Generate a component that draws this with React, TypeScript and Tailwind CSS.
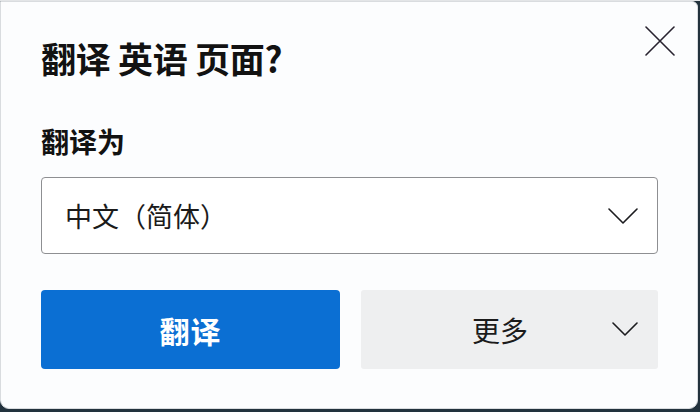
import React from "react";

const font = { fontFamily: '"Noto Sans CJK SC", "Noto Sans", sans-serif' };

function Chevron({ w, h }: { w: number; h: number }) {
  return (
    <svg width={w} height={h} viewBox={`0 0 ${w} ${h}`} fill="none">
      <path
        d={`M1 1 L${w / 2} ${h - 1} L${w - 1} 1`}
        stroke="#1c1c1f"
        strokeWidth="1.6"
        strokeLinecap="round"
        strokeLinejoin="round"
      />
    </svg>
  );
}

export default function App() {
  return (
    <div className="w-[700px] h-[412px] bg-[#22323d] flex flex-col overflow-hidden" style={font}>
      <div className="h-[1px] w-full bg-[#e3e5e7] shrink-0" />
      <div className="relative w-[698px] h-[408px] bg-[#fcfdfe] border border-[#d9dcdf] rounded-b-[9px] rounded-tr-[6px] pl-[40px] pr-[39px] pt-[38px]">
        <button className="absolute top-[24px] right-[22px] w-[30px] h-[30px] flex items-center justify-center">
          <svg width="30" height="30" viewBox="0 0 30 30" fill="none">
            <path d="M1 1 L29 29 M29 1 L1 29" stroke="#28232f" strokeWidth="1.6" strokeLinecap="round" />
          </svg>
        </button>
        <h1 className="text-[35px] leading-[35px] font-bold text-[#121212] tracking-[-0.3px]">
          翻译 英语 页面?
        </h1>
        <div className="mt-[52px] text-[28px] leading-[28px] font-bold text-[#121212]">
          翻译为
        </div>
        <div className="mt-[22px] h-[77px] w-[617px] border border-[#8e8f92] rounded-[4px] bg-white flex items-center justify-between pl-[23px] pr-[19px]">
          <span className="text-[27px] leading-[27px] text-[#1b1b1b]">中文（简体）</span>
          <Chevron w={30} h={16} />
        </div>
        <div className="mt-[36px] grid grid-cols-[299px_297px] gap-x-[21px]">
          <button className="h-[79px] rounded-[4px] bg-[#0b6fd3] flex items-center justify-center">
            <span className="text-[30px] leading-[30px] font-bold text-white tracking-[1px]">翻译</span>
          </button>
          <button className="relative h-[79px] rounded-[3px] bg-[#eeeff0] flex items-center justify-center pr-[19px]">
            <span className="text-[28px] leading-[28px] text-[#1b1b1b]">更多</span>
            <span className="absolute right-[20px] top-[32px] flex">
              <Chevron w={26} h={14} />
            </span>
          </button>
        </div>
      </div>
      <div className="flex-1" />
    </div>
  );
}
